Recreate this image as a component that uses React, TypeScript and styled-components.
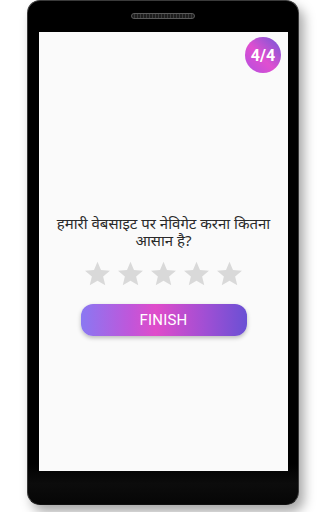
import styled, { createGlobalStyle } from "styled-components";

const GlobalStyle = createGlobalStyle`
  html, body {
    margin: 0;
    padding: 0;
    background: #ffffff;
  }
  body {
    font-family: Roboto, "Noto Sans", "Liberation Sans", sans-serif;
  }
`;

const Page = styled.div`
  width: 325px;
  height: 512px;
  display: flex;
  justify-content: center;
  padding-left: 1px;
  box-sizing: border-box;
`;

const Phone = styled.div`
  width: 272px;
  height: 505px;
  box-sizing: border-box;
  background: linear-gradient(#000 0%, #000 92%, #0c0c0c 96%, #060606 100%);
  border: 1px solid #3a3a3a;
  border-bottom-color: #111;
  border-radius: 13px;
  padding: 31px 10px 33px 11px;
  display: flex;
  flex-direction: column;
  box-shadow: 5px 7px 12px rgba(0, 0, 0, 0.35);
  position: relative;
`;

const Speaker = styled.div`
  position: absolute;
  top: 12px;
  left: 103px;
  width: 64px;
  height: 6px;
  box-sizing: border-box;
  border: 1px solid #5a5a5a;
  border-radius: 3px;
  background: repeating-linear-gradient(90deg, #1c1c1c 0 2px, #3a3a3a 2px 3px);
`;

const Screen = styled.div`
  flex: 1;
  background: #fafafa;
  display: flex;
  flex-direction: column;
  padding: 5px 7px 0 0;
`;

const TopRow = styled.div`
  display: flex;
  justify-content: flex-end;
`;

const Badge = styled.div`
  width: 36px;
  height: 36px;
  border-radius: 50%;
  background: linear-gradient(45deg, #b24fe0 0%, #e04fd0 45%, #6f58d8 100%);
  color: #fff;
  font-weight: 700;
  font-size: 16px;
  display: flex;
  align-items: center;
  justify-content: center;
`;

const Body = styled.div`
  display: flex;
  flex-direction: column;
  align-items: center;
  margin-top: 142px;
  padding-left: 7px;
`;

const Question = styled.p`
  margin: 0;
  font-family: "Noto Sans", "Noto Sans Devanagari", sans-serif;
  font-size: 15px;
  line-height: 17px;
  color: #2a2a2a;
  text-align: center;
  width: 236px;
`;

const Stars = styled.div`
  display: flex;
  gap: 6px;
  margin-top: 12px;
`;

const FinishButton = styled.button`
  margin-top: 17px;
  width: 166px;
  height: 32px;
  border: none;
  border-radius: 12px;
  background: linear-gradient(90deg, #8a78f2 0%, #c056da 30%, #e04cca 45%, #a04fd4 75%, #6a50d4 100%);
  color: #fff;
  font-family: Roboto, "Liberation Sans", sans-serif;
  font-size: 15px;
  letter-spacing: 0.2px;
  box-shadow: 0 2px 4px rgba(0, 0, 0, 0.25);
`;

const Star = () => (
  <svg width="27" height="26" viewBox="0 0 24 23">
    <path
      d="M12 0.6l3.1 7.4 8 0.6-6.1 5.2 1.9 7.8L12 17.4l-6.9 4.2 1.9-7.8L0.9 8.6l8-0.6z"
      fill="#d9d9d9"
    />
  </svg>
);

export default function App() {
  return (
    <>
      <GlobalStyle />
      <Page>
        <Phone>
          <Speaker />
          <Screen>
            <TopRow>
              <Badge>4/4</Badge>
            </TopRow>
            <Body>
              <Question>हमारी वेबसाइट पर नेविगेट करना कितना आसान है?</Question>
              <Stars>
                {[0, 1, 2, 3, 4].map((i) => (
                  <Star key={i} />
                ))}
              </Stars>
              <FinishButton>FINISH</FinishButton>
            </Body>
          </Screen>
        </Phone>
      </Page>
    </>
  );
}
